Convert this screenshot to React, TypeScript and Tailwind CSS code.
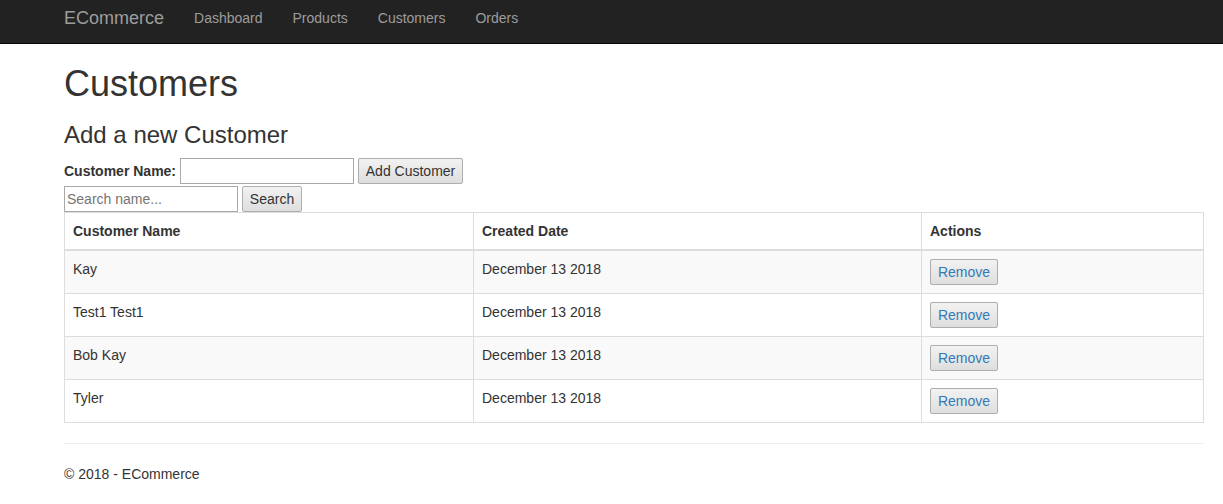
const customers = [
  { name: "Kay", created: "December 13 2018" },
  { name: "Test1 Test1", created: "December 13 2018" },
  { name: "Bob Kay", created: "December 13 2018" },
  { name: "Tyler", created: "December 13 2018" },
];

const navLinks = ["Dashboard", "Products", "Customers", "Orders"];

export default function App() {
  return (
    <div className="min-h-screen bg-white text-[14px] leading-[20px] text-[#333] font-['Liberation_Sans',Arial,sans-serif]">
      {/* Navbar */}
      <header className="h-[44px] bg-[#222] border-b border-[#080808]">
        <div className="ml-[49px] flex">
          <a className="px-[15px] pt-[8px] text-[18px] leading-[20px] text-[#9d9d9d]">ECommerce</a>
          <nav className="flex">
            {navLinks.map((l) => (
              <a key={l} className="px-[15px] pt-[8px] text-[#9d9d9d]">
                {l}
              </a>
            ))}
          </nav>
        </div>
      </header>

      {/* Body */}
      <main className="ml-[64px] w-[1140px]">
        <h1 className="mt-[20px] text-[36px] leading-[39.6px] font-normal">Customers</h1>
        <h3 className="mt-[18px] text-[24px] leading-[26.4px] font-normal">Add a new Customer</h3>

        <div className="mt-[10px] flex items-center h-[26px]">
          <label className="font-bold">Customer Name:</label>
          <input className="ml-[4px] w-[174px] h-[26px] border border-[#a9a9a9] bg-white px-[2px] outline-none" />
          <button className="ml-[4px] h-[26px] w-[105px] border border-[#adadad] rounded-[2px] bg-gradient-to-b from-[#f2f2f2] to-[#dedede] text-[#333]">
            Add Customer
          </button>
        </div>
        <div className="mt-[2px] flex items-center h-[26px]">
          <input
            placeholder="Search name..."
            className="w-[174px] h-[26px] border border-[#a9a9a9] bg-white px-[2px] outline-none placeholder:text-[#757575]"
          />
          <button className="ml-[4px] h-[26px] w-[60px] border border-[#adadad] rounded-[2px] bg-gradient-to-b from-[#f2f2f2] to-[#dedede] text-[#333]">
            Search
          </button>
        </div>

        <table className="w-full border-collapse border border-[#ddd]">
          <thead>
            <tr className="border-b-2 border-[#ddd]">
              <th className="w-[409px] p-[8px] text-left font-bold border border-[#ddd] border-b-2">Customer Name</th>
              <th className="w-[448px] p-[8px] text-left font-bold border border-[#ddd] border-b-2">Created Date</th>
              <th className="p-[8px] text-left font-bold border border-[#ddd] border-b-2">Actions</th>
            </tr>
          </thead>
          <tbody>
            {customers.map((c, i) => (
              <tr key={c.name} className={i % 2 === 0 ? "bg-[#f9f9f9]" : "bg-white"}>
                <td className="h-[43px] p-[8px] align-top border border-[#ddd]">{c.name}</td>
                <td className="p-[8px] align-top border border-[#ddd]">{c.created}</td>
                <td className="p-[8px] align-top border border-[#ddd]">
                  <button className="h-[26px] w-[68px] border border-[#adadad] rounded-[2px] bg-gradient-to-b from-[#f2f2f2] to-[#dedede] text-[#337ab7] leading-[20px]">
                    Remove
                  </button>
                </td>
              </tr>
            ))}
          </tbody>
        </table>

        <hr className="mt-[20px] border-0 border-t border-[#eee]" />
        <footer className="pt-[20px]">
          <p>© 2018 - ECommerce</p>
        </footer>
      </main>
    </div>
  );
}
